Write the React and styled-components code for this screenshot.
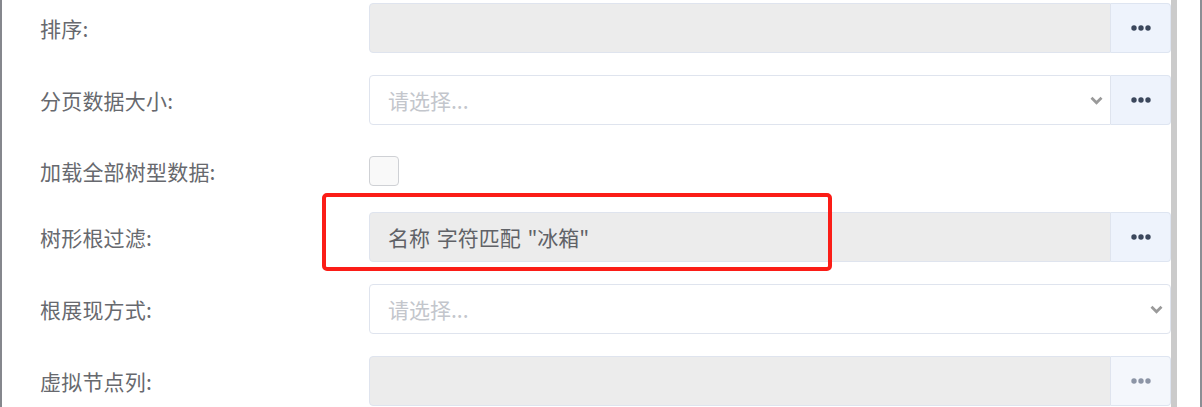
import React from 'react'
import styled, { createGlobalStyle } from 'styled-components'

const GlobalStyle = createGlobalStyle`
  html, body {
    margin: 0;
    padding: 0;
    background: #fff;
    font-family: "Noto Sans CJK SC", "Noto Sans", sans-serif;
  }
`

const Frame = styled.div`
  display: flex;
  height: 407px;
  overflow: hidden;
  border-right: 2px solid #8c8e94;
  box-sizing: border-box;
`

const Panel = styled.div`
  width: 1171px;
  flex-shrink: 0;
  box-sizing: border-box;
  border-left: 2px solid #85878d;
  padding: 3px 0 0 38px;
  display: flex;
  flex-direction: column;
  gap: 22px;
`

const ScrollTrack = styled.div`
  width: 6px;
  flex-shrink: 0;
  background: #cbcbcb;
`

const Gutter = styled.div`
  flex: 1;
  background: #fff;
`

const Row = styled.div`
  position: relative;
  display: grid;
  grid-template-columns: 329px 1fr;
  align-items: center;
  height: ${p => (p.$check ? '30px' : '50px')};
  margin: ${p => (p.$check ? '9px 0 4px' : '0')};
`

const Label = styled.div`
  font-size: 21px;
  color: #67696e;
  white-space: nowrap;
  letter-spacing: 0.2px;
`

const Control = styled.div`
  display: flex;
  height: 100%;
`

const Field = styled.div`
  flex: 1;
  display: flex;
  align-items: center;
  box-sizing: border-box;
  padding: 0 7px 0 18px;
  font-size: 21px;
  word-spacing: 2px;
  color: ${p => (p.$placeholder ? '#c3c6cc' : '#606267')};
  background: ${p => (p.$select ? '#fff' : '#ececec')};
  border: 1px solid #dfe4ee;
  border-radius: ${p => (p.$alone ? '4px' : '4px 0 0 4px')};
  white-space: nowrap;
`

const FieldText = styled.span`
  flex: 1;
`

const MoreButton = styled.div`
  width: 60px;
  flex-shrink: 0;
  box-sizing: border-box;
  display: flex;
  align-items: center;
  justify-content: center;
  background: ${p => (p.$muted ? '#f4f7fc' : '#eef3fc')};
  border: 1px solid #dee5f1;
  border-left: none;
  border-radius: 0 4px 4px 0;
  color: ${p => (p.$muted ? '#8c95a6' : '#3b475c')};
`

const CheckBox = styled.div`
  width: 30px;
  height: 30px;
  box-sizing: border-box;
  background: #f9f9f9;
  border: 1px solid #cfd1d5;
  border-radius: 4px;
`

const Highlight = styled.div`
  position: absolute;
  left: 282px;
  top: -19px;
  width: 510px;
  height: 78px;
  box-sizing: border-box;
  border: 4px solid #fb1d17;
  border-radius: 5px;
  pointer-events: none;
`

const Dots = () => (
  <svg width="20" height="6" viewBox="0 0 20 6">
    <circle cx="3" cy="3" r="2.7" fill="currentColor" />
    <circle cx="10" cy="3" r="2.7" fill="currentColor" />
    <circle cx="17" cy="3" r="2.7" fill="currentColor" />
  </svg>
)

const Chevron = () => (
  <svg width="13" height="9" viewBox="0 0 13 9">
    <path d="M1.5 1.8 L6.5 6.8 L11.5 1.8" fill="none" stroke="#9a9a9a" strokeWidth="2.8" />
  </svg>
)

const App = () => {
  return (
    <>
      <GlobalStyle />
      <Frame>
        <Panel>
          <Row>
            <Label>排序:</Label>
            <Control>
              <Field />
              <MoreButton><Dots /></MoreButton>
            </Control>
          </Row>
          <Row>
            <Label>分页数据大小:</Label>
            <Control>
              <Field $select $placeholder>
                <FieldText>请选择...</FieldText>
                <Chevron />
              </Field>
              <MoreButton><Dots /></MoreButton>
            </Control>
          </Row>
          <Row $check>
            <Label>加载全部树型数据:</Label>
            <Control>
              <CheckBox />
            </Control>
          </Row>
          <Row>
            <Label>树形根过滤:</Label>
            <Control>
              <Field>名称 字符匹配 "冰箱"</Field>
              <MoreButton><Dots /></MoreButton>
            </Control>
            <Highlight />
          </Row>
          <Row>
            <Label>根展现方式:</Label>
            <Control>
              <Field $select $placeholder $alone>
                <FieldText>请选择...</FieldText>
                <Chevron />
              </Field>
            </Control>
          </Row>
          <Row>
            <Label>虚拟节点列:</Label>
            <Control>
              <Field />
              <MoreButton $muted><Dots /></MoreButton>
            </Control>
          </Row>
        </Panel>
        <ScrollTrack />
        <Gutter />
      </Frame>
    </>
  )
}

export default App
